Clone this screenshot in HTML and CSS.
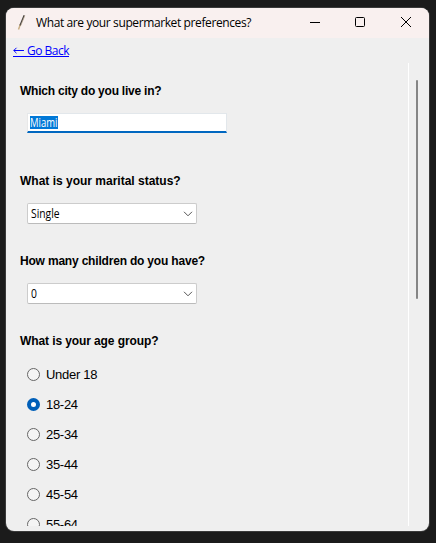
FILE: index.html
```html
<!DOCTYPE html>
<html lang="en">
<head>
<meta charset="utf-8">
<title>What are your supermarket preferences?</title>
<link rel="stylesheet" href="styles.css">
</head>
<body>
<main class="window">
  <header class="titlebar">
    <svg class="app-icon" width="16" height="16" viewBox="0 0 16 16"><path d="M4.5 15.5 6.5 10" stroke="#c9ad82" stroke-width="1.5"/><path d="M6 11.5 10.2 1.2" stroke="#4a4642" stroke-width="1.4"/><path d="M6.8 11.5 10.9 1.6" stroke="#b9a48a" stroke-width=".6"/></svg>
    <h1 class="title">What are your supermarket preferences?</h1>
    <div class="controls">
      <svg width="10" height="10" viewBox="0 0 10 10"><path d="M0 5.5h10"/></svg>
      <svg width="10" height="10" viewBox="0 0 10 10"><rect x=".5" y=".5" width="9" height="9" rx="1"/></svg>
      <svg class="close" width="10" height="10" viewBox="0 0 10 10"><path d="M0 0 10 10M10 0 0 10"/></svg>
    </div>
  </header>
  <nav class="nav"><a class="back" href="#"><svg width="11" height="7" viewBox="0 0 11 7"><path d="M.8 3.5H11M3.5.8.8 3.5 3.5 6.2"/></svg><span class="back-text">Go Back</span></a></nav>
  <div class="scroller">
    <form class="form">
      <section class="question city">
        <h2 class="q-city">Which city do you live in?</h2>
        <div class="entry"><span class="selected"><span class="value">Miami</span></span></div>
      </section>
      <section class="question">
        <h2 class="q-marital">What is your marital status?</h2>
        <div class="combo"><span class="value">Single</span><svg width="10" height="6" viewBox="0 0 10 6"><path d="M1 .8 5 4.8 9 .8"/></svg></div>
      </section>
      <section class="question">
        <h2 class="q-children">How many children do you have?</h2>
        <div class="combo"><span class="value">0</span><svg width="10" height="6" viewBox="0 0 10 6"><path d="M1 .8 5 4.8 9 .8"/></svg></div>
      </section>
      <section class="question">
        <h2 class="q-age">What is your age group?</h2>
        <div class="options">
          <div class="option"><i class="radio"></i><span>Under 18</span></div>
          <div class="option"><i class="radio checked"></i><span>18-24</span></div>
          <div class="option"><i class="radio"></i><span>25-34</span></div>
          <div class="option"><i class="radio"></i><span>35-44</span></div>
          <div class="option"><i class="radio"></i><span>45-54</span></div>
          <div class="option"><i class="radio"></i><span>55-64</span></div>
        </div>
      </section>
    </form>
    <div class="track"><div class="thumb"></div></div>
  </div>
</main>
</body>
</html>
```

FILE: styles.css
```css
* { box-sizing: border-box; }
body {
  margin: 0;
  height: 543px;
  padding: 8px 7px 12px 6px;
  overflow: hidden;
  background: #1b1b1b;
  color: #000;
  font-family: "Open Sans", "Noto Sans", sans-serif;
  font-size: 12px;
}
.window {
  height: 523px;
  border-radius: 8px;
  overflow: hidden;
  background: #efefef;
  box-shadow: 0 0 0 1px #3a3a3a;
}
.titlebar {
  display: flex;
  align-items: center;
  height: 30px;
  padding: 0 18px 0 8px;
  background: #f9f0ef;
}
.app-icon { margin-top: -2px; }
.title {
  margin: 0 0 0 6px;
  font-size: 12px;
  font-weight: 400;
  line-height: 30px;
  white-space: nowrap;
  letter-spacing: -0.39px;
}
.controls {
  display: flex;
  gap: 35px;
  margin: -2px 0 0 auto;
}
.controls svg { fill: none; stroke: #000; stroke-width: 1; overflow: visible; }
.controls .close { margin-left: 1px; }
.nav { height: 25px; padding: 5px 0 0 7px; }
.back {
  display: flex;
  align-items: center;
  gap: 3px;
  width: 56px;
  height: 14px;
  border-bottom: 1px solid #00f;
  color: #00f;
  text-decoration: none;
  white-space: nowrap;
}
.back svg { fill: none; stroke: #00f; margin-top: 1px; }
.back-text { padding-top: 2px; line-height: 14px; letter-spacing: -0.5px; }
.scroller { display: flex; height: 463px; overflow: hidden; }
.form { width: 402px; padding: 20px 0 0 14px; }
.question { height: 80px; }
.city { height: 90px; }
h2 {
  margin: 0;
  font: bold 12px/16px "Liberation Sans", Arial, sans-serif;
  white-space: nowrap;
}
.q-city { letter-spacing: -0.23px; }
.q-children { letter-spacing: -0.19px; }
.q-age { letter-spacing: -0.1px; }
.entry {
  width: 200px;
  height: 20px;
  margin: 14px 0 0 7px;
  padding: 2px;
  background: #fff;
  border: 1px solid #e2e7eb;
  border-bottom: 2px solid #0067c0;
  border-left-color: #e8e8e8;
}
.selected {
  display: block;
  width: 28px;
  height: 13px;
  line-height: 14px;
  background: #0078d7;
  color: #fff;
}
.value {
  display: inline-block;
  transform: scaleX(.86);
  transform-origin: 0 50%;
}
.selected .value { transform: scaleX(.79); }
.combo {
  display: flex;
  align-items: center;
  justify-content: space-between;
  width: 170px;
  height: 21px;
  margin: 14px 0 0 7px;
  padding: 0 3px;
  background: #fff;
  border: 1px solid #ccc;
  border-bottom-color: #bbb;
  border-radius: 2px;
  line-height: 19px;
}
.combo svg { fill: none; stroke: #555; }
.options { margin: 10px 0 0 7px; }
.option {
  display: flex;
  align-items: center;
  gap: 6px;
  height: 30px;
  font: 13px/28px "Liberation Sans", Arial, sans-serif;
}
.option span { padding-top: 2px; letter-spacing: -0.3px; }
.radio {
  width: 13px;
  height: 13px;
  border: 1px solid #666;
  border-radius: 50%;
  background: #f4f4f4;
}
.checked { border: 4px solid #005fb8; background: #fff; }
.track { flex: 1; border-left: 1px solid #fff; padding: 17px 0 0 7px; }
.thumb { width: 2px; height: 219px; background: #858585; border-radius: 1px; }
```
